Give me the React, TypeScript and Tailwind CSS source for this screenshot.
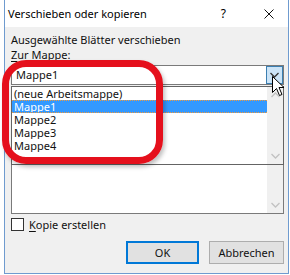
import React from "react";

const font = { fontFamily: '"Noto Sans", "Liberation Sans", sans-serif' };

function Chevron({ up = false, color = "#c2c2c2" }: { up?: boolean; color?: string }) {
  return (
    <svg width="9" height="6" viewBox="0 0 9 6" className="block">
      <path
        d={up ? "M0.5 5 L4.5 1 L8.5 5" : "M0.5 1 L4.5 5 L8.5 1"}
        fill="none"
        stroke={color}
        strokeWidth="1.3"
      />
    </svg>
  );
}

function Cursor() {
  return (
    <svg width="13" height="21" viewBox="0 0 13 21" className="block">
      <path
        d="M0.5 0.5 L0.5 16.5 L4.5 12.5 L7.5 19.5 L10 18.5 L7 11.5 L12 11.5 Z"
        fill="#ffffff"
        stroke="#000000"
        strokeWidth="1"
        strokeLinejoin="miter"
      />
    </svg>
  );
}

const items = ["(neue Arbeitsmappe)", "Mappe1", "Mappe2", "Mappe3", "Mappe4"];

export default function App() {
  return (
    <div className="relative h-[275px] w-[290px] overflow-hidden bg-white text-[11px] text-[#111]" style={font}>
      <div className="ml-[4px] flex h-[274px] w-[285px] flex-col border-x border-b border-[#6f9bcf]">
        {/* title bar */}
        <div className="flex h-[27px] shrink-0 items-center bg-white pl-[3px]">
          <span className="text-[11px] leading-[14px] text-black">Verschieben oder kopieren</span>
          <span className="ml-auto mr-[38px] text-[12px] leading-[14px] text-black">?</span>
          <svg width="10" height="10" viewBox="0 0 10 10" className="mr-[14px] block">
            <path d="M0.5 0.5 L9.5 9.5 M9.5 0.5 L0.5 9.5" stroke="#111" strokeWidth="1" />
          </svg>
        </div>

        {/* body */}
        <div className="flex flex-1 flex-col bg-[#f0f0f0] pl-[6px] pr-[4px]">
          <div className="mt-[5px] leading-[15px]">Ausgewählte Blätter verschieben</div>
          <div className="leading-[15px]">
            <span className="underline underline-offset-2">Z</span>ur Mappe:
          </div>

          <div className="relative mt-[3px]">
            {/* combobox */}
            <div className="flex h-[20px] items-center border border-[#7a7a7a] bg-white pl-[4px]">
              <span className="leading-[14px]">Mappe1</span>
              <div className="ml-auto flex h-[18px] w-[17px] items-center justify-center border border-[#3c7fb1] bg-[#cce4f7]">
                <Chevron color="#333" />
              </div>
            </div>

            {/* list box behind */}
            <div className="mt-[3px] flex h-[126px] border border-[#7a7a7a] bg-white">
              <div className="flex-1" />
              <div className="flex w-[16px] flex-col items-center justify-end bg-[#f0f0f0] pb-[5px]">
                <Chevron />
              </div>
            </div>

            {/* open dropdown */}
            <div className="absolute left-0 right-0 top-[21px] flex h-[79px] border border-[#646464] bg-white">
              <div className="flex flex-1 flex-col">
                {items.map((it, i) => (
                  <div
                    key={it}
                    className={
                      i === 1
                        ? "flex h-[13px] items-center overflow-hidden border-y border-dotted border-[#f29a3b] bg-[#3399ff] pl-[2px] leading-[12px] text-white"
                        : "flex h-[13px] items-center overflow-hidden pl-[2px] leading-[12px]"
                    }
                  >
                    {it}
                  </div>
                ))}
              </div>
              <div className="flex w-[16px] flex-col items-center justify-between bg-[#f0f0f0] py-[5px]">
                <Chevron up />
                <Chevron />
              </div>
            </div>
          </div>

          {/* checkbox */}
          <div className="mt-[4px] flex items-center gap-[5px]">
            <div className="h-[13px] w-[13px] border border-[#333] bg-white" />
            <span className="leading-[13px]">
              <span className="underline underline-offset-2">K</span>opie erstellen
            </span>
          </div>

          {/* buttons */}
          <div className="mt-[10px] flex justify-end gap-[10px]">
            <button className="h-[23px] w-[73px] border-2 border-[#0078d7] bg-[#e1e1e1] text-[11px] leading-[14px]">
              OK
            </button>
            <button className="h-[23px] w-[75px] border border-[#adadad] bg-[#e1e1e1] text-[11px] leading-[14px]">
              Abbrechen
            </button>
          </div>
        </div>
      </div>

      {/* red annotation */}
      <div className="pointer-events-none absolute left-[2px] top-[60px] h-[104px] w-[161px] rounded-[24px] border-[7px] border-[#e5101c] shadow-[2px_3px_4px_rgba(0,0,0,0.25)]" />

      {/* mouse cursor */}
      <div className="pointer-events-none absolute left-[272px] top-[76px]">
        <Cursor />
      </div>
    </div>
  );
}
